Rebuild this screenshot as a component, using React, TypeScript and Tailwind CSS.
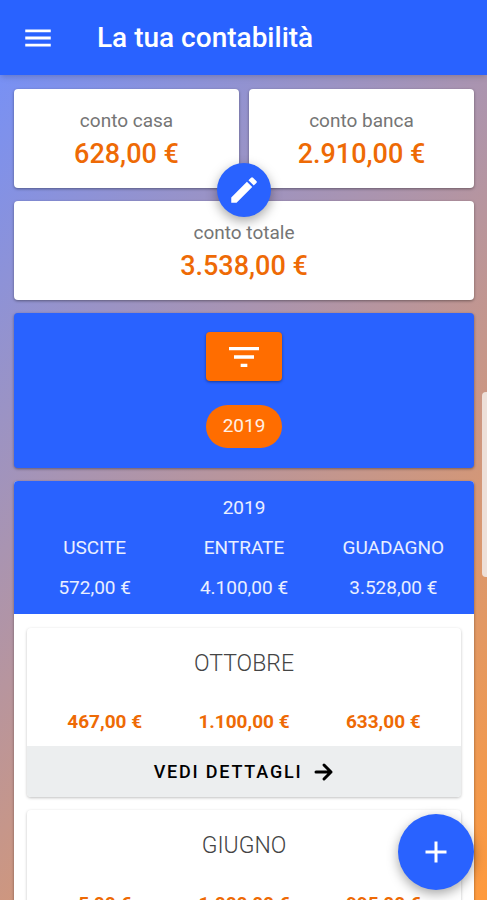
import React from "react";
import { MdAdd, MdEdit, MdFilterList, MdMenu } from "react-icons/md";

type Month = {
    name: string;
    expenses: string;
    income: string;
    profit: string;
};

const months: Month[] = [
    { name: "OTTOBRE", expenses: "467,00 €", income: "1.100,00 €", profit: "633,00 €" },
    { name: "GIUGNO", expenses: "5,00 €", income: "1.000,00 €", profit: "995,00 €" },
];

const AccountCard = ({ label, amount }: { label: string; amount: string }) => (
    <div className="flex-1 rounded bg-white pt-[18px] pb-4 text-center shadow-[0_1px_3px_rgba(0,0,0,0.4)]">
        <p className="text-[19px] leading-7 text-[#757575]">{label}</p>
        <p className="pt-px text-[27px] leading-9 font-medium text-[#ee6a05]">{amount}</p>
    </div>
);

const MonthCard = ({ month }: { month: Month }) => (
    <div className="overflow-hidden rounded bg-white shadow-[0_1px_3px_rgba(0,0,0,0.25)]">
        <h3 className="pt-4 text-center text-[23px] leading-10 font-light text-[#444444]">{month.name}</h3>
        <div className="grid grid-cols-3 px-2 pt-[18px] pb-1 text-center text-[19px] leading-10 font-bold text-[#ee6a05]">
            <span>{month.expenses}</span>
            <span>{month.income}</span>
            <span>{month.profit}</span>
        </div>
        <button
            type="button"
            className="flex h-[51px] w-full items-center justify-center gap-3 bg-[#eceeef] text-[18px] font-medium tracking-widest text-black"
        >
            VEDI DETTAGLI
            <svg width="20" height="20" viewBox="0 0 20 20" fill="none" stroke="currentColor" strokeWidth="3" strokeLinecap="round" strokeLinejoin="round">
                <path d="M2 10h15M10 3l7 7-7 7" />
            </svg>
        </button>
    </div>
);

const App = () => {
    return (
        <div className="flex h-screen flex-col overflow-hidden bg-[linear-gradient(135deg,#7090ff,#ff9a3c)] font-[Roboto,sans-serif]">
            <header className="z-10 flex h-[75px] shrink-0 items-center gap-[42px] bg-[#2962ff] px-[21px] text-white shadow-md">
                <button type="button" aria-label="Menu">
                    <MdMenu size={34} />
                </button>
                <h1 className="text-[28px] font-medium">La tua contabilità</h1>
            </header>

            <main className="flex min-h-0 flex-1 flex-col gap-[13px] overflow-y-auto pt-[14px] pr-[13px] pl-[14px] [scrollbar-width:none]">
                <section className="relative flex shrink-0 flex-col gap-[13px]">
                    <div className="flex gap-[10px]">
                        <AccountCard label="conto casa" amount="628,00 €" />
                        <AccountCard label="conto banca" amount="2.910,00 €" />
                    </div>
                    <AccountCard label="conto totale" amount="3.538,00 €" />
                    <button
                        type="button"
                        aria-label="Modifica"
                        className="absolute top-[74px] left-1/2 flex size-[54px] -translate-x-1/2 items-center justify-center rounded-full bg-[#2962ff] text-white shadow-[0_4px_12px_rgba(0,0,0,0.35)]"
                    >
                        <MdEdit size={34} />
                    </button>
                </section>

                <section className="flex shrink-0 flex-col items-center gap-6 rounded bg-[#2962ff] pt-[19px] pb-5 shadow-[0_1px_3px_rgba(0,0,0,0.4)]">
                    <button
                        type="button"
                        aria-label="Filtra"
                        className="flex h-[49px] w-[76px] items-center justify-center rounded bg-[#ff6d00] text-white shadow-[0_1px_3px_rgba(0,0,0,0.4)]"
                    >
                        <MdFilterList size={40} />
                    </button>
                    <button
                        type="button"
                        className="h-[43px] w-[76px] rounded-full bg-[#ff6d00] text-[19px] text-white/90"
                    >
                        2019
                    </button>
                </section>

                <section className="shrink-0 rounded bg-white shadow-[0_1px_3px_rgba(0,0,0,0.4)]">
                    <div className="rounded-t bg-[#2962ff] px-[6px] pt-[7px] pb-[6px] text-center text-[19px] leading-10 text-white/90">
                        <h2>2019</h2>
                        <dl className="grid grid-cols-3">
                            <div>
                                <dt>USCITE</dt>
                                <dd>572,00 €</dd>
                            </div>
                            <div>
                                <dt>ENTRATE</dt>
                                <dd>4.100,00 €</dd>
                            </div>
                            <div>
                                <dt>GUADAGNO</dt>
                                <dd>3.528,00 €</dd>
                            </div>
                        </dl>
                    </div>
                    <div className="flex flex-col gap-[13px] px-[13px] py-[14px]">
                        {months.map((month) => (
                            <MonthCard key={month.name} month={month} />
                        ))}
                    </div>
                </section>
            </main>

            {/* edge panel handle */}
            <div className="fixed top-[392px] right-0 h-[185px] w-[5px] rounded-l bg-[#eee0d9]" />

            <button
                type="button"
                aria-label="Aggiungi"
                className="fixed right-[13px] bottom-[10px] flex size-[76px] items-center justify-center rounded-full bg-[#2962ff] text-white shadow-[0_4px_12px_rgba(0,0,0,0.35)]"
            >
                <MdAdd size={36} />
            </button>
        </div>
    );
};

export default App;
